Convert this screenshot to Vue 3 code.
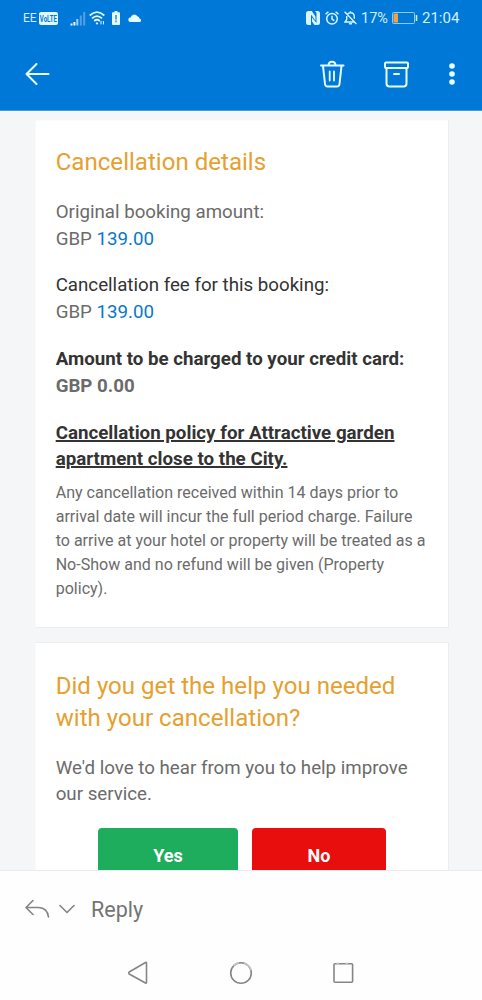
<script setup>
const amounts = [
  { label: 'Original booking amount:', value: '139.00', tone: 'muted' },
  { label: 'Cancellation fee for this booking:', value: '139.00', tone: 'dark' },
]
</script>

<template>
  <div class="screen">
    <header class="top">
      <div class="status">
        <span class="carrier">EE</span>
        <span class="volte"><span>VoLTE</span></span>
        <svg class="signal" width="16" height="15" viewBox="0 0 16 15">
          <path d="M0.5 12.5h2V14.500h-2zM3.4 11h2V14.500h-2z" fill="#e4fbff" />
          <path d="M6.3 8h2V14.500h-2z" fill="#9fd2f5" />
          <path d="M9.8 4.5h2V14.500h-2zM13.2 1h2V14.500h-2z" fill="#559fe6" />
        </svg>
        <svg class="wifi" width="16" height="14" viewBox="0 0 16 14" fill="none" stroke="#e4fbff" stroke-width="1.8">
          <path d="M0.7 4.5Q8-2.2 15.3 4.5M3 7.4Q8 2.8 13 7.4M5.2 10Q8 7.6 10.8 10" />
          <path d="M8 11.1l1.3 1.3L8 13.7l-1.3-1.3z" fill="#e4fbff" stroke="none" />
          <path d="M12 10v3.4M14.4 10v3.4" stroke-width="1" />
        </svg>
        <svg class="cell" width="8" height="14" viewBox="0 0 8 14">
          <path d="M2.5 0h3v1.3H7a1 1 0 0 1 1 1V13a1 1 0 0 1-1 1H1a1 1 0 0 1-1-1V2.300a1 1 0 0 1 1-1h1.500z" fill="#e4fbff" />
          <path d="M4 4v4.500M4 9.600v1.600" stroke="#0878d8" stroke-width="1.300" />
        </svg>
        <svg class="cloud" width="14" height="8" viewBox="0 0 14 8">
          <path d="M2.500 8A2.200 2.200 0 0 1 2.500 3.600 3.800 3.800 0 0 1 9.400 2.300 2.900 2.900 0 0 1 11.500 4.500 1.800 1.800 0 0 1 11.800 8z" fill="#e4fbff" />
        </svg>
        <span class="gap"></span>
        <svg class="nfc" width="14" height="14" viewBox="0 0 14 14" fill="#d8f5ff">
          <path d="M5 14H2.500Q0 14 0 11.500V2.500Q0 0 2.500 0H5.800L9.500 5.500V9.800L5 3.500z" />
          <path d="M9 0h2.500Q14 0 14 2.500v9Q14 14 11.500 14H8.500L6 10.500V6.500L10.500 12V2z" />
        </svg>
        <svg class="alarm" width="14" height="14" viewBox="0 0 14 14" fill="none" stroke="#d8f5ff" stroke-width="1.500">
          <circle cx="7" cy="7.800" r="5.300" />
          <path d="M0.500 3.300L3.400 0.800M10.600 0.800l2.900 2.500M7 4.800v3.300l2.300 1.500" />
        </svg>
        <svg class="bell" width="13" height="14" viewBox="0 0 13 14" fill="none" stroke="#d8f5ff" stroke-width="1.400">
          <path d="M3.600 3.200C4.500 2 5.500 1.700 6.500 1.700c2.500 0 3.800 1.800 3.800 4v2M2.700 5v3.500L1 11h9.800M6.500 0.300v1.400M0.600 0.800l11.800 12.100" />
          <path d="M5 12.700h3" stroke-width="1.500" />
        </svg>
        <span class="percent">17%</span>
        <svg class="battery" width="26" height="12" viewBox="0 0 26 12">
          <rect x="0.500" y="0.500" width="22" height="11" rx="0.800" fill="none" stroke="#8fc9f1" />
          <rect x="1.500" y="1.500" width="4.500" height="9" fill="#eca447" />
          <path d="M24.500 3v6" stroke="#c5ecff" stroke-width="1.600" />
        </svg>
        <span class="clock">21:04</span>
      </div>
      <nav class="toolbar">
        <svg class="back" width="26" height="24" viewBox="0 0 26 24" fill="none" stroke="#e8fdff" stroke-width="2" stroke-linecap="round" stroke-linejoin="round">
          <path d="M12.500 2L2.500 12l10 10M2.500 12h22" />
        </svg>
        <svg class="trash" width="26" height="28" viewBox="0 0 26 28" fill="none" stroke="#e8fdff" stroke-width="2" stroke-linecap="round" stroke-linejoin="round">
          <path d="M2 5.500h22.500M9.500 5.500c0-5 7-5 7 0M4 6l2 18Q6.300 26.500 8.500 26.500h9.500q2.200 0 2.500-2.500L22.500 6" />
          <path d="M10.700 11.500v9M15 11.500v9" stroke-width="1.800" />
        </svg>
        <svg class="archive" width="26" height="28" viewBox="0 0 26 28" fill="none" stroke="#e8fdff" stroke-width="2" stroke-linecap="round" stroke-linejoin="round">
          <rect x="2" y="2.500" width="23" height="5.500" rx="1" />
          <path d="M3.500 8v15.500Q3.500 26.500 6.500 26.500h14q3 0 3-3V8M11 14h5" />
        </svg>
        <svg class="more" width="6" height="24" viewBox="0 0 6 24" fill="#e8fdff">
          <circle cx="3" cy="4" r="2.800" /><circle cx="3" cy="12" r="2.800" /><circle cx="3" cy="20" r="2.800" />
        </svg>
      </nav>
    </header>

    <main class="message">
      <section class="card details">
        <h2>Cancellation details</h2>
        <p v-for="item in amounts" :key="item.label">
          <span :class="item.tone">{{ item.label }}</span><br />GBP <a>{{ item.value }}</a>
        </p>
        <p class="strong"><span class="dark">Amount to be charged to your credit card:</span><br />GBP 0.00</p>
        <h3>Cancellation policy for Attractive garden<br />apartment close to the City.</h3>
        <div class="policy">
          Any cancellation received within 14 days prior to<br />
          arrival date will incur the full period charge. Failure<br />
          to arrive at your hotel or property will be treated as a<br />
          No-Show and no refund will be given (Property<br />
          policy).
        </div>
      </section>
      <section class="card feedback">
        <h2>Did you get the help you needed<br />with your cancellation?</h2>
        <p>We'd love to hear from you to help improve<br />our service.</p>
        <div class="actions">
          <button class="yes">Yes</button>
          <button class="no">No</button>
        </div>
      </section>
    </main>

    <footer class="bottom">
      <div class="reply">
        <svg width="26" height="20" viewBox="0 0 26 20" fill="none" stroke="#848484" stroke-width="1.600" stroke-linecap="round" stroke-linejoin="round">
          <path d="M9 1.500L2 8.500l7 7M2 8.500H14.500q9 0.500 10 9.500" />
        </svg>
        <svg class="chevron" width="16" height="10" viewBox="0 0 16 10" fill="none" stroke="#848484" stroke-width="1.600" stroke-linecap="round" stroke-linejoin="round">
          <path d="M1 1.500l7 7 7-7" />
        </svg>
        <span>Reply</span>
      </div>
      <div class="keys">
        <svg width="24" height="24" viewBox="0 0 24 24"><path d="M19.500 2v19.500q0 1-1 0.500L2.200 13q-1-1 0-2L18.500 1.500q1-0.500 1 0.500z" /></svg>
        <svg width="24" height="24" viewBox="0 0 24 24">
          <circle cx="12" cy="12" r="10.300" />
          <path class="shine" d="M4.700 4.700A10.300 10.300 0 0 1 10 1.900M15 2.200A10.300 10.300 0 0 1 22 9.500" />
        </svg>
        <svg width="24" height="24" viewBox="0 0 24 24">
          <rect x="3" y="2.700" width="18.600" height="18.600" rx="1" />
          <path class="shine" d="M5.500 2.700h2.500M14.500 2.700h2.500" />
        </svg>
      </div>
    </footer>
  </div>
</template>

<style>
body { margin: 0; overflow: hidden; }
</style>

<style scoped>
.screen {
  width: 482px;
  height: 1000px;
  display: flex;
  flex-direction: column;
  overflow: hidden;
  background: #fefefe;
  font-family: Roboto, "Liberation Sans", sans-serif;
}
svg { display: block; flex: none; }
.top { height: 111px; flex: none; background: #0078d8; border-bottom: 1px solid #4a9ad8; box-sizing: border-box; }
.status { height: 36px; display: flex; align-items: center; padding: 0 22px 0 23px; color: #d2f1ff; }
.carrier { width: 16px; font-size: 12px; }
.volte {
  width: 19px; height: 13px; border-radius: 2px; background: #dff9ff; color: #0878d8;
  display: flex; justify-content: center; font-size: 9.500px; font-weight: 700; line-height: 13px;
}
.volte span { flex: none; transform: scaleX(0.64); }
.signal { margin-left: 12px; }
.wifi { margin-left: 3px; }
.cell { margin-left: 7px; }
.cloud { margin-left: 8px; }
.gap { flex: 1; }
.alarm { margin-left: 5px; }
.bell { margin-left: 5px; }
.percent { width: 28px; margin-left: 4px; font-size: 14.500px; white-space: nowrap; }
.battery { margin-left: 3px; }
.clock { width: 38px; margin-left: 4px; font-size: 15px; white-space: nowrap; }
.toolbar { height: 76px; display: flex; align-items: center; padding: 0 27px 0 24px; box-sizing: border-box; }
.trash { margin-left: auto; }
.archive { margin-left: 38px; }
.more { margin-left: 40px; }

.message { height: 759px; flex: none; overflow: hidden; padding: 9px 33px 0 35px; background: #f4f6f8; box-sizing: border-box; }
.card { box-sizing: border-box; background: #fff; border: 1px solid #ebedef; border-left-color: #f8f9fa; padding: 25px 19px 0 19.700px; color: #6b6b6b; }
.details { height: 508px; border-top-color: #fafbfb; }
.feedback { height: 300px; margin-top: 14px; padding-top: 27px; }
h2 { margin: 0 0 21px; font-size: 24.080px; line-height: 32px; font-weight: 400; color: #e6a02f; white-space: nowrap; }
.feedback h2 { margin-bottom: 20.500px; }
p { margin: 0 0 20px; font-size: 18.720px; line-height: 26.700px; white-space: nowrap; }
.feedback p { margin-bottom: 20.500px; }
a { color: #0b77c9; }
.dark { color: #333; }
.strong { font-weight: 700; margin-bottom: 20.500px; }
h3 { margin: 0 0 7.500px; font-size: 18.740px; line-height: 26.700px; font-weight: 700; color: #333; text-decoration: underline; text-decoration-thickness: 1.500px; white-space: nowrap; }
.policy { font-size: 16.050px; line-height: 24px; white-space: nowrap; }
.actions { display: flex; gap: 14px; padding-left: 42.300px; }
button { height: 56px; padding: 0; border: 0; border-radius: 4px; color: #fff; font: 700 18px/56px Roboto, sans-serif; }
.yes { width: 140px; background: #1dad5d; }
.no { width: 134px; background: #e90e0e; }

.bottom { flex: 1; border-top: 1px solid #e9ebed; }
.reply { height: 76px; display: flex; align-items: center; padding-left: 24px; font-size: 21.500px; color: #747474; }
.chevron { margin: 0 16px 0 9px; }
.keys { display: flex; justify-content: center; gap: 78px; padding-top: 14px; }
.keys svg { fill: none; stroke: #858585; stroke-width: 1.600; stroke-linejoin: round; }
.keys .shine { stroke: #c4c4c4; stroke-width: 1.700; }
</style>
